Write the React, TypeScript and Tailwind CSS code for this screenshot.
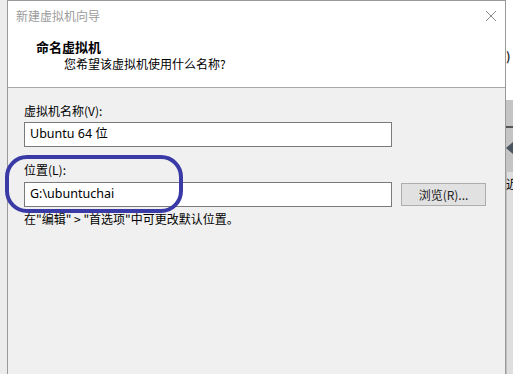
import React from "react";

const cjk = { fontFamily: '"Noto Sans CJK SC", "Noto Sans", sans-serif' };

export default function App() {
  return (
    <div className="relative w-[513px] h-[374px] overflow-hidden flex bg-[#e9e9e9]" style={cjk}>
      {/* left background strip */}
      <div className="w-[7px] h-full bg-[#ececec]" />
      {/* dialog */}
      <div className="w-[499px] h-full flex flex-col border-x border-t border-[#9a9a9a] bg-[#f0f0f0]">
        {/* title + header (white) */}
        <div className="h-[87px] bg-white border-b border-[#a8a8a8] flex flex-col">
          <div className="h-[29px] flex items-center justify-between pl-[8px] pr-[8px]">
            <span className="text-[12px] leading-none text-[#9b9b9b]">新建虚拟机向导</span>
            <svg width="12" height="12" viewBox="0 0 12 12">
              <path d="M1 1L11 11M11 1L1 11" stroke="#8a8a8a" strokeWidth="1" fill="none" />
            </svg>
          </div>
          <div className="pl-[28px] pt-[9px] text-[13px] leading-[16px] font-bold text-black">命名虚拟机</div>
          <div className="pl-[56px] pt-[1px] text-[12px] leading-[16px] text-black">您希望该虚拟机使用什么名称?</div>
        </div>
        {/* body */}
        <div className="flex-1 pl-[16px] pt-[15px] text-[12px] text-black">
          <div className="leading-[16px]">虚拟机名称(V):</div>
          <div className="mt-[3px] w-[368px] h-[25px] bg-white border border-[#7a7a7a] flex items-center pl-[5px] text-[12.5px]" style={{ fontFamily: '"Noto Sans", "Noto Sans CJK SC", sans-serif' }}>
            Ubuntu 64 位
          </div>
          <div className="mt-[15px] leading-[16px]">位置(L):</div>
          <div className="mt-[4px] flex items-center">
            <div className="w-[368px] h-[25px] bg-white border border-[#7a7a7a] flex items-center pl-[5px] text-[12.5px]" style={{ fontFamily: '"Noto Sans", "Noto Sans CJK SC", sans-serif' }}>
              G:\ubuntuchai
            </div>
            <div className="ml-[9px] w-[85px] h-[23px] bg-[#e1e1e1] border border-[#adadad] flex items-center justify-center text-[12px] text-[#222]">
              浏览(R)...
            </div>
          </div>
          <div className="mt-[4px] leading-[16px]">在"编辑" &gt; "首选项"中可更改默认位置。</div>
        </div>
      </div>
      {/* right background strip */}
      <div className="w-[7px] h-full flex flex-col">
        <div className="h-[100px] bg-white relative">
          <div className="absolute left-0 top-[50px] text-[12px] leading-none font-bold text-[#333]">)</div>
        </div>
        <div className="h-[72px] bg-[#c4c4c4] flex flex-col">
          <div className="mt-[26px] h-[2px] bg-[#555]" />
          <div className="mt-[14px] w-0 h-0 border-y-[6px] border-y-transparent border-r-[7px] border-r-[#4a5560]" />
        </div>
        <div className="flex-1 bg-[#dedede] border-l border-[#bdbdbd] relative">
          <div className="absolute -left-[1px] top-[6px] text-[12px] leading-none text-black">近</div>
        </div>
      </div>
      {/* annotation oval */}
      <div className="absolute left-[5px] top-[155px] w-[178px] h-[58px] rounded-[22px] border-[4px] border-[#3a3aa6]" />
    </div>
  );
}
